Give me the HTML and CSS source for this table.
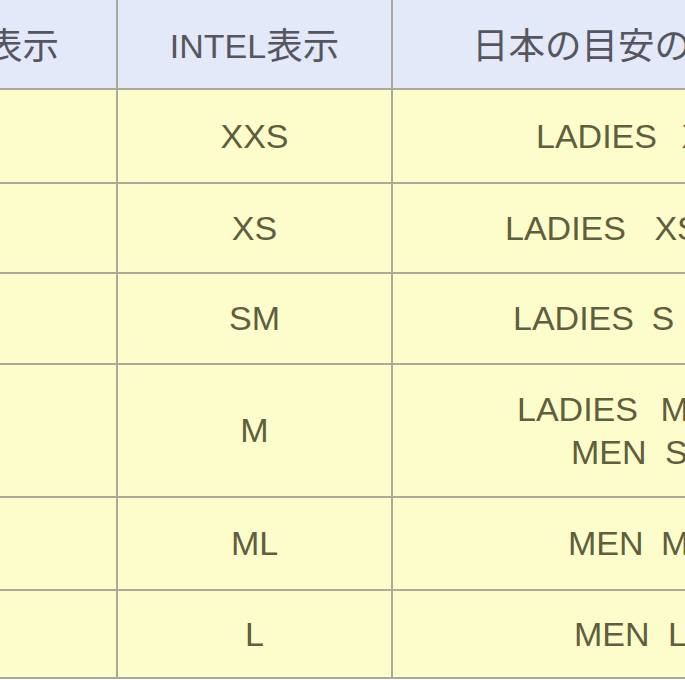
FILE: index.html
```html
<!DOCTYPE html>
<html lang="ja">
<head>
<meta charset="utf-8">
<title>サイズ表</title>
<link rel="stylesheet" href="styles.css">
</head>
<body>
<table class="size-table">
  <colgroup>
    <col class="c1">
    <col class="c2">
    <col class="c3">
  </colgroup>
  <thead>
    <tr class="h-row">
      <th class="center"><span class="cjk">表示</span></th>
      <th class="center">INTEL<span class="cjk">表示</span></th>
      <th class="left"><span class="cjk jp-head">日本の目安の</span></th>
    </tr>
  </thead>
  <tbody>
    <tr class="r1">
      <td></td>
      <td class="center">XXS</td>
      <td class="left"><span class="line l1">LADIES XXS</span></td>
    </tr>
    <tr class="r2">
      <td></td>
      <td class="center">XS</td>
      <td class="left"><span class="line l2">LADIES XS</span></td>
    </tr>
    <tr class="r3">
      <td></td>
      <td class="center">SM</td>
      <td class="left"><span class="line l3">LADIES S</span></td>
    </tr>
    <tr class="r4">
      <td></td>
      <td class="center">M</td>
      <td class="left"><span class="line l4a">LADIES M</span><span class="line l4b">MEN S</span></td>
    </tr>
    <tr class="r5">
      <td></td>
      <td class="center">ML</td>
      <td class="left"><span class="line l5">MEN M</span></td>
    </tr>
    <tr class="r6">
      <td></td>
      <td class="center">L</td>
      <td class="left"><span class="line l6">MEN L</span></td>
    </tr>
  </tbody>
</table>
</body>
</html>
```

FILE: styles.css
```css
html, body {
  margin: 0;
  padding: 0;
  background: #ffffff;
  overflow: hidden;
  width: 685px;
  height: 685px;
}

.size-table {
  border-collapse: collapse;
  table-layout: fixed;
  width: 800px;
  margin-left: -73px;
  margin-top: -4px;
  font-family: "Liberation Sans", "Noto Sans CJK JP", sans-serif;
  font-size: 34px;
  color: #5f5e3e;
}

.c1 { width: 189px; }
.c2 { width: 275px; }
.c3 { width: 336px; }

.size-table th,
.size-table td {
  border: 2px solid #aaa99b;
  padding: 0;
  vertical-align: middle;
  font-weight: normal;
  background: #fdfccb;
}

.size-table th {
  background: #e3e9f9;
  color: #56565e;
}

.cjk {
  font-family: "Noto Sans CJK JP", sans-serif;
  font-size: 36.5px;
  vertical-align: -1px;
}

.center { text-align: center; }
.left { text-align: left; }

.jp-head {
  display: block;
  padding-left: 79px;
  white-space: nowrap;
}

.h-row { height: 92px; }
.r1 { height: 94px; }
.r2 { height: 90px; }
.r3 { height: 91px; }
.r4 { height: 133px; }
.r5 { height: 93px; }
.r6 { height: 88px; }

.line {
  display: block;
  white-space: nowrap;
  line-height: 43px;
  word-spacing: 12px;
}

.l1 { padding-left: 143px; word-spacing: 15px; }
.l2 { padding-left: 112px; word-spacing: 19px; }
.l3 { padding-left: 120px; word-spacing: 8px; }
.l4a { padding-left: 124px; word-spacing: 13px; }
.l4b { padding-left: 178px; word-spacing: 9px; }
.l5 { padding-left: 175px; word-spacing: 8px; }
.l6 { padding-left: 181px; word-spacing: 9px; }
```
